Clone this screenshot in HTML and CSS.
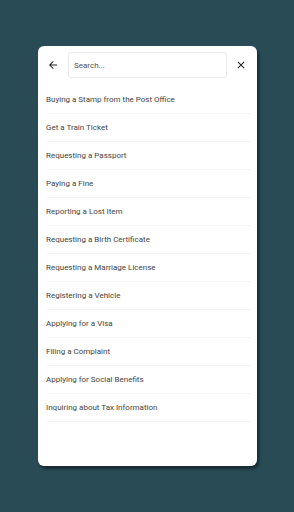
FILE: index.html
```html
<!DOCTYPE html>
<html>
<head>
<meta charset="utf-8">
<link rel="stylesheet" href="styles.css">
</head>
<body>
<div class="page">
  <div class="card">
    <div class="header">
      <button class="icon-btn back" aria-label="Back">
        <svg width="12" height="12" viewBox="0 0 24 24"><path d="M20 11H7.83l5.59-5.59L12 4l-8 8 8 8 1.41-1.41L7.83 13H20v-2z" fill="#222"/></svg>
      </button>
      <div class="search">Search...</div>
      <button class="icon-btn close" aria-label="Close">
        <svg width="12" height="12" viewBox="0 0 24 24"><path d="M19 6.41L17.590 5 12 10.59 6.41 5 5 6.41 10.59 12 5 17.59 6.41 19 12 13.41 17.59 19 19 17.59 13.41 12z" fill="#222"/></svg>
      </button>
    </div>
    <ul class="list">
      <li>Buying a Stamp from the Post Office</li>
      <li>Get a Train Ticket</li>
      <li>Requesting a Passport</li>
      <li>Paying a Fine</li>
      <li>Reporting a Lost Item</li>
      <li>Requesting a Birth Certificate</li>
      <li>Requesting a Marriage License</li>
      <li>Registering a Vehicle</li>
      <li>Applying for a Visa</li>
      <li>Filing a Complaint</li>
      <li>Applying for Social Benefits</li>
      <li>Inquiring about Tax Information</li>
    </ul>
  </div>
</div>
</body>
</html>
```
FILE: styles.css
```css
* { box-sizing: border-box; }
html, body { margin: 0; padding: 0; }
body {
  background: #284b55;
  font-family: Roboto, "Noto Sans", sans-serif;
  width: 294px;
  height: 512px;
}
.page {
  padding: 46px 37px 0 38px;
}
.card {
  background: #fff;
  border-radius: 6px;
  height: 420px;
  box-shadow: 2px 3px 3px rgba(0,0,0,0.45);
  padding: 6px 6px 0 8px;
}
.header {
  display: flex;
  align-items: center;
  height: 26px;
  margin-bottom: 8px;
}
.icon-btn {
  border: 0;
  background: none;
  padding: 0;
  width: 14px;
  height: 14px;
  display: flex;
  align-items: center;
  justify-content: center;
}
.back { margin-left: 0; margin-right: 8px; }
.close { margin-left: 7px; }
.search {
  flex: 0 0 159px;
  height: 26px;
  border: 1px solid #ebebeb;
  border-radius: 3px;
  font-size: 8px;
  color: #555;
  padding-left: 5px;
  display: flex;
  align-items: center;
}
.list {
  list-style: none;
  margin: 0;
  padding: 0;
}
.list li {
  height: 28px;
  display: flex;
  align-items: center;
  font-size: 8px;
  color: #444;
  border-bottom: 1px solid #f5f5f5;
}
```
